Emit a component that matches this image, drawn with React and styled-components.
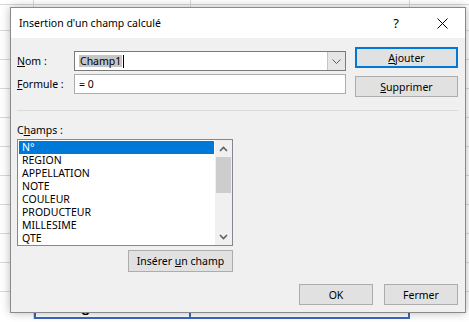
import React from 'react';
import styled, { createGlobalStyle } from 'styled-components';

const GlobalStyle = createGlobalStyle`
  html, body {
    margin: 0;
    padding: 0;
    background: #ffffff;
    overflow: hidden;
  }
  body {
    width: 469px;
    height: 322px;
    font-family: "Noto Sans", "Segoe UI", sans-serif;
  }
`

const Desktop = styled.div`
  position: relative;
  width: 469px;
  height: 322px;
  overflow: hidden;
`

// spreadsheet behind the dialog
const Sheet = styled.div`
  display: grid;
  grid-template-columns: 34px 157px 219px 80px;
  grid-template-rows: 5px 26px repeat(9, 29px) 27px;
`
const Cell = styled.div`
  border-right: 1px solid #d9d9d9;
  border-bottom: 1px solid #d9d9d9;
`
const TotalCell = styled.div`
  display: flex;
  align-items: flex-end;
  justify-content: ${p => (p.$right ? 'flex-end' : 'flex-start')};
  padding: 0 6px 3px 6px;
  border-bottom: 2px solid #3d66bd;
  border-right: 2px solid #3d66bd;
  border-left: ${p => (p.$first ? '2px solid #3d66bd' : 'none')};
  font-family: "Liberation Sans", Arial, sans-serif;
  font-weight: bold;
  font-size: 15px;
  line-height: 15px;
  color: #000;
`
const EmptyTotal = styled.div`
  border-right: 1px solid #d9d9d9;
`

// dialog window
const Dialog = styled.div`
  position: absolute;
  left: 10px;
  top: 7px;
  width: 456px;
  height: 306px;
  box-sizing: border-box;
  border: 1px solid #8a8a8a;
  background: #f0f0f0;
  box-shadow: 0 0 9px rgba(0, 0, 0, 0.28);
  display: flex;
  flex-direction: column;
  font-size: 10.5px;
  color: #000;
`
const TitleBar = styled.div`
  height: 30px;
  background: #ffffff;
  display: flex;
  align-items: center;
  padding-left: 8px;
`
const Title = styled.div`
  flex: 1;
  font-size: 10.5px;
  color: #000;
`
const TitleButton = styled.div`
  width: 46px;
  height: 30px;
  display: flex;
  align-items: center;
  justify-content: center;
  font-size: 13px;
`

const Body = styled.div`
  flex: 1;
  display: flex;
  flex-direction: column;
  padding: 0 7px 0 6px;
`
const TopRow = styled.div`
  display: flex;
  justify-content: space-between;
  height: 59px;
`
const Fields = styled.div`
  display: flex;
  flex-direction: column;
  gap: 3px;
  padding-top: 13px;
`
const FieldRow = styled.div`
  display: flex;
  align-items: center;
`
const Label = styled.label`
  width: 57px;
  font-size: 10.5px;
  line-height: 14px;
`
const InputBox = styled.div`
  box-sizing: border-box;
  width: 272px;
  height: 20px;
  background: #fff;
  border: 1px solid ${p => (p.$dark ? '#7a7a7a' : '#adadad')};
  display: flex;
  align-items: center;
`
const InputText = styled.div`
  flex: 1;
  display: flex;
  align-items: center;
  padding-left: 4px;
  font-size: 10.5px;
`
const Selected = styled.span`
  background: #c6c6c6;
  padding: 0 1px;
  line-height: 12px;
`
const Caret = styled.span`
  display: inline-block;
  width: 1px;
  height: 13px;
  background: #000;
  margin-left: 1px;
`
const DropButton = styled.div`
  width: 17px;
  height: 18px;
  background: #e6e6e6;
  border-left: 1px solid #c4c4c4;
  display: flex;
  align-items: center;
  justify-content: center;
`

const Actions = styled.div`
  display: flex;
  flex-direction: column;
  gap: 8px;
  padding-top: 9px;
`
const Button = styled.div`
  box-sizing: border-box;
  width: ${p => p.$w || 103}px;
  height: ${p => p.$h || 21}px;
  background: #e1e1e1;
  border: ${p => (p.$default ? '2px solid #0078d7' : '1px solid #adadad')};
  display: flex;
  align-items: center;
  justify-content: center;
  font-size: 10.5px;
  color: #000;
`

const Separator = styled.div`
  height: 1px;
  background: #dadada;
  margin-top: 13px;
`

const ListSection = styled.div`
  width: 216px;
  display: flex;
  flex-direction: column;
  margin-top: 12px;
`
const ListLabel = styled.div`
  font-size: 10.5px;
  line-height: 14px;
  margin-bottom: 2px;
`
const ListBox = styled.div`
  box-sizing: border-box;
  height: 107px;
  border: 1px solid #828790;
  background: #fff;
  display: flex;
`
const Items = styled.div`
  flex: 1;
  padding: 1px 1px 0 1px;
`
const Item = styled.div`
  height: 13px;
  line-height: 13px;
  padding-left: 3px;
  font-size: 10.5px;
  background: ${p => (p.$active ? '#0078d7' : 'transparent')};
  color: ${p => (p.$active ? '#fff' : '#000')};
`
const ScrollBar = styled.div`
  width: 17px;
  background: #f0f0f0;
  display: flex;
  flex-direction: column;
  align-items: center;
`
const ScrollArrow = styled.div`
  height: 17px;
  width: 17px;
  display: flex;
  align-items: center;
  justify-content: center;
`
const Thumb = styled.div`
  width: 15px;
  height: 36px;
  background: #cdcdcd;
`
const Track = styled.div`
  flex: 1;
`
const InsertRow = styled.div`
  display: flex;
  justify-content: flex-end;
  margin-top: 4px;
`

const Footer = styled.div`
  display: flex;
  justify-content: flex-end;
  gap: 11px;
  margin-top: 12px;
`

const Chevron = ({ up }) => (
  <svg width="9" height="6" viewBox="0 0 9 6">
    <polyline
      points={up ? '1,5 4.5,1.5 8,5' : '1,1 4.5,4.5 8,1'}
      fill="none"
      stroke="#606060"
      strokeWidth="1.6"
    />
  </svg>
)

const fields = ['N°', 'REGION', 'APPELLATION', 'NOTE', 'COULEUR', 'PRODUCTEUR', 'MILLESIME', 'QTE'];

export default function App() {
  const cells = [];
  for (let r = 0; r < 11; r++) {
    for (let c = 0; c < 4; c++) cells.push(<Cell key={r + '-' + c} />);
  }

  return (
    <Desktop>
      <GlobalStyle />
      <Sheet>
        {cells}
        <EmptyTotal />
        <TotalCell $first>Total général</TotalCell>
        <TotalCell $right>203 500</TotalCell>
        <EmptyTotal />
      </Sheet>

      <Dialog>
        <TitleBar>
          <Title>Insertion d'un champ calculé</Title>
          <TitleButton>?</TitleButton>
          <TitleButton>
            <svg width="11" height="11" viewBox="0 0 11 11">
              <path d="M0.5 0.5 L10.5 10.5 M10.5 0.5 L0.5 10.5" stroke="#000" strokeWidth="1" />
            </svg>
          </TitleButton>
        </TitleBar>

        <Body>
          <TopRow>
            <Fields>
              <FieldRow>
                <Label><u>N</u>om :</Label>
                <InputBox $dark>
                  <InputText>
                    <Selected>Champ1</Selected>
                    <Caret />
                  </InputText>
                  <DropButton>
                    <svg width="9" height="5" viewBox="0 0 9 5">
                      <polyline points="0.5,0.5 4.5,4.5 8.5,0.5" fill="none" stroke="#606060" strokeWidth="1" />
                    </svg>
                  </DropButton>
                </InputBox>
              </FieldRow>
              <FieldRow>
                <Label><u>F</u>ormule :</Label>
                <InputBox>
                  <InputText>= 0</InputText>
                </InputBox>
              </FieldRow>
            </Fields>
            <Actions>
              <Button $default><span><u>A</u>jouter</span></Button>
              <Button><span><u>S</u>upprimer</span></Button>
            </Actions>
          </TopRow>

          <Separator />

          <ListSection>
            <ListLabel>C<u>h</u>amps :</ListLabel>
            <ListBox>
              <Items>
                {fields.map((f, i) => (
                  <Item key={f} $active={i === 0}>{f}</Item>
                ))}
              </Items>
              <ScrollBar>
                <ScrollArrow><Chevron up /></ScrollArrow>
                <Thumb />
                <Track />
                <ScrollArrow><Chevron /></ScrollArrow>
              </ScrollBar>
            </ListBox>
            <InsertRow>
              <Button $w={105} $h={22}><span>Insérer <u>u</u>n champ</span></Button>
            </InsertRow>
          </ListSection>

          <Footer>
            <Button $w={74}>OK</Button>
            <Button $w={74}>Fermer</Button>
          </Footer>
        </Body>
      </Dialog>
    </Desktop>
  );
}
